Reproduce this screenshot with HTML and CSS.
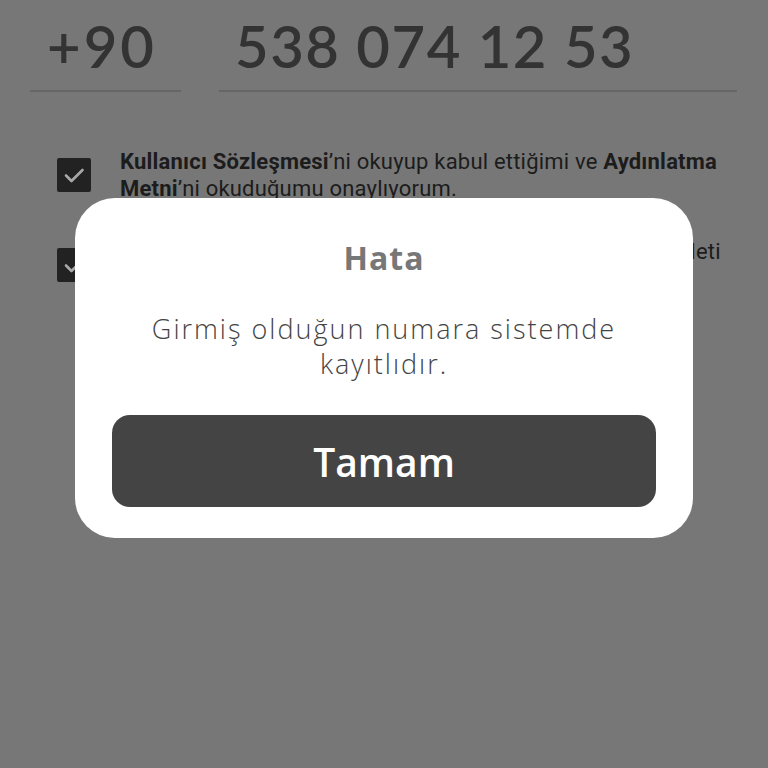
FILE: index.html
```html
<!DOCTYPE html>
<html lang="tr">
<head>
    <meta charset="UTF-8">
    <meta name="viewport" content="width=device-width, initial-scale=1.0">
    <title>Kayıt</title>
    <link rel="stylesheet" href="styles.css">
</head>
<body>
    <div class="page">
        <!-- Phone input -->
        <div class="phone-row">
            <div class="field code-field">+90</div>
            <div class="field number-field">538 074 12 53</div>
        </div>

        <!-- Agreements -->
        <div class="consent">
            <div class="checkbox">
                <svg viewBox="0 0 34 34" width="34" height="34"><path d="M9 17.5l5.5 5.5L25.5 12" fill="none" stroke="#a8a8a8" stroke-width="2.6" stroke-linecap="round" stroke-linejoin="round"/></svg>
            </div>
            <p><b>Kullanıcı Sözleşmesi</b>’ni okuyup kabul ettiğimi ve <b>Aydınlatma Metni</b>’ni okuduğumu onaylıyorum.</p>
        </div>
        <div class="consent">
            <div class="checkbox">
                <svg viewBox="0 0 34 34" width="34" height="34"><path d="M9 17.5l5.5 5.5L25.5 12" fill="none" stroke="#a8a8a8" stroke-width="2.6" stroke-linecap="round" stroke-linejoin="round"/></svg>
            </div>
            <p>Kampanya ve fırsatlardan haberdar olmak için elektronik ileti almak istiyorum.</p>
        </div>
    </div>

    <!-- Error dialog -->
    <div class="dialog">
        <h2>Hata</h2>
        <p class="dialog-text">Girmiş olduğun numara sistemde kayıtlıdır.</p>
        <button class="dialog-button">Tamam</button>
    </div>
</body>
</html>
```

FILE: styles.css
```css
body {
    margin: 0;
    padding: 0;
    width: 768px;
    height: 768px;
    overflow: hidden;
    background-color: #777777;
    font-family: 'Roboto', sans-serif;
    position: relative;
}

.page {
    padding: 14px 31px 0 30px;
}

.phone-row {
    display: flex;
    gap: 38px;
}

.field {
    font-family: 'Lato', sans-serif;
    font-size: 58px;
    font-weight: 600;
    letter-spacing: 1.5px;
    color: #333333;
    line-height: 64px;
    padding-bottom: 12px;
    border-bottom: 2px solid #666666;
}

.code-field {
    width: 134px;
    padding-left: 17px;
    letter-spacing: 3px;
}

.number-field {
    flex: 1;
    padding-left: 16px;
}

.consent {
    display: flex;
    align-items: flex-start;
    gap: 29px;
    margin-top: 56px;
    padding-left: 27px;
}

.consent + .consent {
    margin-top: 36px;
}

.checkbox {
    width: 34px;
    height: 34px;
    flex-shrink: 0;
    margin-top: 10px;
    background-color: #222222;
    border-radius: 2px;
}

.checkbox svg {
    display: block;
}

.consent p {
    margin: 0;
    font-size: 22px;
    letter-spacing: 0.2px;
    line-height: 27px;
    color: #1c1c1c;
}

.consent b {
    font-weight: 700;
}

.dialog {
    position: absolute;
    left: 75px;
    top: 198px;
    width: 618px;
    height: 340px;
    box-sizing: border-box;
    background-color: #ffffff;
    border-radius: 40px;
    padding: 36px 37px 0 37px;
    display: flex;
    flex-direction: column;
    align-items: center;
    font-family: 'Open Sans', sans-serif;
}

.dialog h2 {
    margin: 0;
    font-size: 32px;
    font-weight: 700;
    letter-spacing: 1px;
    color: #777777;
    line-height: 48px;
}

.dialog-text {
    margin: 29px 0 0 0;
    width: 520px;
    text-align: center;
    font-size: 27px;
    font-weight: 300;
    letter-spacing: 2px;
    line-height: 35px;
    color: #444444;
}

.dialog-button {
    margin-top: 34px;
    width: 100%;
    height: 92px;
    border: none;
    border-radius: 18px;
    background-color: #444444;
    color: #ffffff;
    font-family: 'Open Sans', sans-serif;
    font-size: 39px;
    font-weight: 600;
}
```
